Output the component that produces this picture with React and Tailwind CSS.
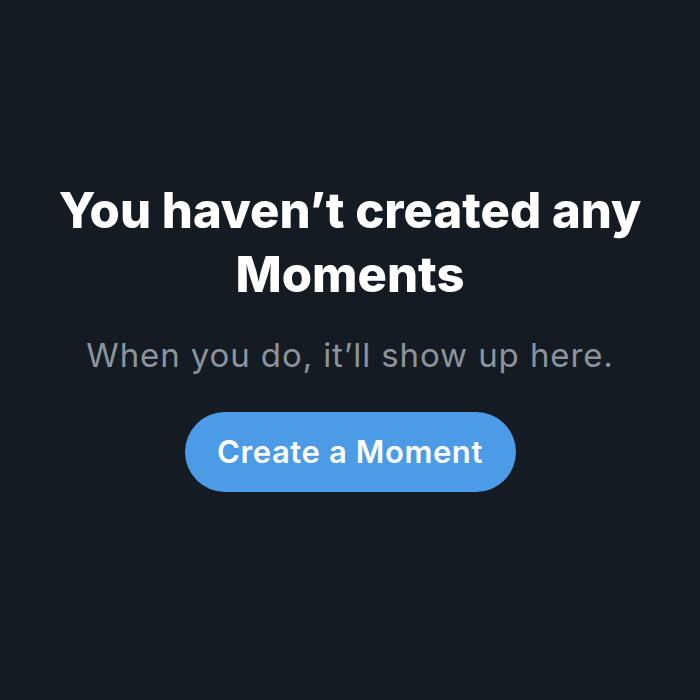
export default function App() {
  return (
    <div className="w-[700px] h-[700px] bg-[#151b22] flex flex-col items-center pt-[179px]" style={{ fontFamily: "Inter, 'Noto Sans', sans-serif" }}>
      <h1 className="text-white text-[49px] leading-[64px] font-extrabold text-center tracking-[0px] w-[640px]">
        You haven’t created any Moments
      </h1>
      <p className="mt-[28px] text-[#8b949d] text-[33px] leading-[40px] text-center tracking-[0.9px]">
        When you do, it’ll show up here.
      </p>
      <button className="mt-[37px] w-[331px] h-[80px] rounded-full bg-[#4b9be6] text-white text-[31px] font-semibold tracking-[0.6px]">
        Create a Moment
      </button>
    </div>
  );
}
